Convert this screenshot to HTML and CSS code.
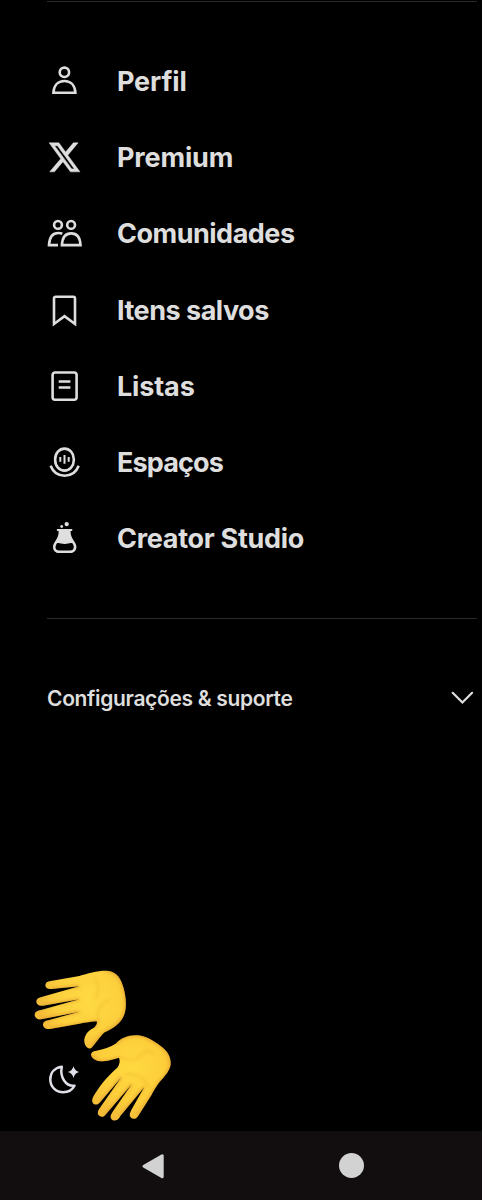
FILE: index.html
```html
<!DOCTYPE html>
<html lang="pt-BR">

<head>
  <meta charset="UTF-8">
  <meta name="viewport" content="width=device-width, initial-scale=1.0">
  <title>Menu</title>
  <link rel="stylesheet" href="styles.css">
</head>

<body>

  <nav class="menu">
    <a class="item">
      <svg class="icon" viewBox="0 0 36 36">
        <circle cx="17.4" cy="9.3" r="4.7" />
        <path d="M6.4 29.7C6.8 22.4 11 18 17.4 18s10.6 4.4 11 11.7z" />
      </svg>
      <span class="perfil">Perfil</span>
    </a>
    <a class="item">
      <svg class="icon solid logo" viewBox="0 0 36 36">
        <path transform="translate(.3 .5) scale(1.43 1.487)" d="M18.244 2.25h3.308l-7.227 8.26 8.502 11.24H16.17l-5.214-6.817L4.99 21.75H1.68l7.73-8.835L1.254 2.25H8.08l4.713 6.231zm-1.161 17.52h1.833L7.084 4.126H5.117z" />
      </svg>
      <span class="premium">Premium</span>
    </a>
    <a class="item">
      <svg class="icon" viewBox="0 0 36 36">
        <circle cx="11" cy="9.9" r="3.9" />
        <circle cx="24.1" cy="9.9" r="3.9" />
        <path d="M14.9 30.1c.4-7.5 3.7-11.7 9.3-11.7s8.9 4.2 9.3 11.7z" />
        <path d="M11 30.1H2C2.4 22.2 6 18 11.4 18c1.5 0 2.8.2 3.9.7" />
      </svg>
      <span class="comunidades">Comunidades</span>
    </a>
    <a class="item">
      <svg class="icon" viewBox="0 0 36 36">
        <path d="M7 32V6.500Q7 4.700 8.800 4.700H26.200Q28 4.700 28 6.500V32L17.500 24.200z" />
      </svg>
      <span class="itens">Itens salvos</span>
    </a>
    <a class="item">
      <svg class="icon" viewBox="0 0 36 36">
        <rect x="5.600" y="4.500" width="24" height="27.200" rx="2.500" />
        <path d="M11.700 13.500h11.700M11.700 19.500h11.700" />
      </svg>
      <span class="listas">Listas</span>
    </a>
    <a class="item">
      <svg class="icon" viewBox="0 0 36 36">
        <rect x="8.200" y="4.600" width="18.600" height="22" rx="9.300" ry="10.300" />
        <path d="M3.600 21.800C6 28 11 31.800 17.600 31.800S29.300 28 31.700 21.800" />
        <path class="thin" d="M13.300 13v4.800M17.500 11v8.700M21.700 13v4.800" />
      </svg>
      <span class="espacos">Espaços</span>
    </a>
    <a class="item">
      <svg class="icon solid" viewBox="0 0 36 36">
        <circle cx="19.700" cy="4.100" r="2.200" />
        <circle cx="14.700" cy="6.500" r="1.400" />
        <path fill-rule="evenodd" d="M10.600 9.100h13.900q1.200 0 .9 1.100-.3.900-1.800.9c-.1 4 .9 6.300 3.200 9.700 1.700 2.500 2.600 4.300 2.600 6.200 0 3.600-2.600 6.100-6.400 6.100H12.200C8.500 33.100 6 30.600 6 27c0-1.900.9-3.700 2.600-6.200 2.200-3.400 3.200-5.700 3-9.700-1.400 0-1.800-.3-1.900-1q0-1 .9-1zM9.900 23.200C8.900 24.900 8.500 26.100 8.500 27.200c0 2 1.500 3.300 3.700 3.300H23c2.300 0 3.800-1.300 3.800-3.300 0-1.300-.5-2.400-1.400-4-3-.6-4.500.9-7.800.8-3.500-.1-5-1.500-7.700-.8z" />
      </svg>
      <span class="creator">Creator Studio</span>
    </a>
  </nav>

  <div class="settings">
    <span>Configurações &amp; suporte</span>
    <svg class="chevron" viewBox="0 0 24 16">
      <path d="M2.700 2.800l9.700 9.700 9.700-9.700" />
    </svg>
  </div>

  <div class="bottom">
    <svg class="moon" viewBox="0 0 32 32">
      <path d="M13.800 2.700C6.800 3.700 2.300 8.600 2.300 15.500c0 7.300 5.600 12.800 13 12.800 5 0 9-2.400 11.200-6.600-8.700.9-14.900-8.500-12.700-19z" />
      <path class="star" d="M25.500 2.300q1.200 4.600 5.700 5.800-4.500 1.200-5.700 5.800-1.200-4.600-5.700-5.800 4.500-1.200 5.700-5.800z" />
    </svg>

    <svg class="hands" viewBox="0 0 510 510">
      <defs>
        <radialGradient id="palm1" gradientUnits="userSpaceOnUse" cx="205" cy="120" r="150">
          <stop offset="0" stop-color="#ffda43" />
          <stop offset=".65" stop-color="#fcd03d" />
          <stop offset="1" stop-color="#f3bb38" />
        </radialGradient>
        <radialGradient id="palm2" gradientUnits="userSpaceOnUse" cx="335" cy="325" r="160">
          <stop offset="0" stop-color="#ffd940" />
          <stop offset=".6" stop-color="#fdcf3b" />
          <stop offset="1" stop-color="#f3bb38" />
        </radialGradient>
        <filter id="soft" x="-20%" y="-20%" width="140%" height="140%">
          <feGaussianBlur stdDeviation="4" />
        </filter>
        <clipPath id="clip1"><use href="#hand1" /></clipPath>
        <clipPath id="clip2"><use href="#hand2" /></clipPath>
      </defs>

      <!-- upper hand, fingers to the left -->
      <path id="hand1" fill="url(#palm1)" d="M88 64L178 48C202 40 230 32 258 32C284 33 299 48 306 70C317 99 321 132 315 157C308 185 286 202 254 217C238 231 226 253 214 264C203 271 191 255 193 238C196 220 207 210 222 203C230 196 232 190 230 184C214 185 196 188 178 191L90 207C76 209 68 201 69 192C70 185 77 182 88 180L178 155L64 178C52 180 43 172 44 163C45 155 52 152 63 150L178 118L69 137C56 139 48 132 49 123C50 116 56 112 67 110L178 79L94 87C83 88 76 83 76 75C77 68 82 65 88 64Z" />
      <g clip-path="url(#clip1)">
        <path class="edge" d="M258 32C284 33 299 48 306 70C317 99 321 132 315 157C308 185 286 202 254 217C238 231 226 253 214 264M222 203Q233 192 230 184L90 207M178 155L64 178M178 118L69 137M178 79L94 87" />
        <path class="crease" d="M236 184C226 154 240 128 270 120M226 56C238 74 238 98 225 116" />
      </g>

      <!-- lower hand, fingers down -->
      <path id="hand2" fill="url(#palm2)" d="M229 272C250 267 272 261 287 251C304 233 327 224 354 226C379 229 398 241 422 258C443 273 453 291 452 313C450 330 437 347 418 367C407 383 401 392 394 406L355 467C350 478 337 479 331 471C327 465 330 458 334 450L373 381L301 468C295 482 281 486 274 477C269 469 274 462 279 454L335 373L256 465C249 474 238 471 234 463C232 455 236 449 241 442L304 352L239 428C232 436 221 436 217 426C215 418 219 412 224 403C246 367 266 346 292 323C299 313 301 302 297 293C284 296 268 303 250 304C230 305 215 296 213 284C213 277 219 273 229 272Z" />
      <g clip-path="url(#clip2)">
        <path class="edge" d="M287 251C304 233 327 224 354 226C379 229 398 241 422 258C443 273 453 291 452 313C450 330 437 347 418 367L355 467M373 381L301 468M335 373L256 465M304 352L239 428M297 293Q268 304 250 304Q220 303 213 284" />
        <path class="crease" d="M298 291C325 305 350 302 360 286C370 272 388 271 402 281M315 343C345 337 370 352 388 382" />
      </g>
    </svg>
  </div>

  <footer class="navbar">
    <svg class="back" viewBox="0 0 24 28">
      <path d="M3 13.200L21.200 2.800V23.800z" />
    </svg>
    <div class="home"></div>
  </footer>

</body>

</html>
```
FILE: styles.css
```css
* {
  box-sizing: border-box;
}

body {
  margin: 0;
  height: 1200px;
  display: flex;
  flex-direction: column;
  overflow: hidden;
  background-color: black;
  color: #dedede;
  font-family: Inter, "Noto Sans", sans-serif;
}

.menu {
  margin: 1px 5px 0 47px;
  height: 618px;
  padding-top: 41px;
  border-top: 1px solid #2b2b2e;
  border-bottom: 1px solid #2b2b2e;
}

.item {
  display: flex;
  align-items: center;
  gap: 34px;
  height: 76.2px;
  font-size: 27px;
  font-weight: 650;
  line-height: 36px;
  white-space: nowrap;
}

.item span {
  padding-top: 2px;
}

.perfil,
.premium,
.listas {
  letter-spacing: -.15px;
}

.comunidades,
.itens {
  letter-spacing: -.5px;
}

.espacos {
  letter-spacing: -.85px;
}

.creator {
  letter-spacing: -.3px;
}

.icon {
  width: 36px;
  height: 36px;
  flex-shrink: 0;
  fill: none;
  stroke: #dedede;
  stroke-width: 2.6;
}

.solid {
  fill: #dedede;
  stroke: none;
}

.logo {
  stroke: #dedede;
  stroke-width: .35;
}

.thin {
  stroke-width: 2;
}

.settings {
  display: flex;
  align-items: center;
  justify-content: space-between;
  height: 158px;
  padding: 0 8px 0 47px;
  font-size: 21px;
  font-weight: 600;
  letter-spacing: -.33px;
}

.chevron {
  width: 24px;
  height: 16px;
  fill: none;
  stroke: #dedede;
  stroke-width: 2.2;
  stroke-linecap: round;
}

.bottom {
  position: relative;
  flex: 1;
  display: flex;
  align-items: flex-end;
  padding: 0 0 35px 48px;
}

.moon {
  width: 32px;
  height: 32px;
  fill: none;
  stroke: #dfe0e8;
  stroke-width: 2.5;
  stroke-linejoin: round;
}

.star {
  fill: #dfe0e8;
  stroke: none;
}

/* hands lie over the theme button */
.hands {
  position: absolute;
  left: 20px;
  bottom: 1px;
  width: 170px;
  height: 170px;
}

.edge,
.crease {
  fill: none;
  stroke: #d98b2b;
  stroke-width: 8;
  opacity: .55;
  filter: url(#soft);
}

.crease {
  stroke: #e8a52e;
  stroke-width: 5;
  opacity: .4;
}

.navbar {
  display: flex;
  align-items: flex-start;
  height: 69px;
  padding: 22px 0 0 141px;
  background-color: #120e0f;
}

.back {
  width: 24px;
  height: 28px;
  fill: #d2d2d2;
  stroke: #d2d2d2;
  stroke-width: 3;
  stroke-linejoin: round;
}

.home {
  width: 25px;
  height: 25px;
  margin-left: 174px;
  border-radius: 50%;
  background-color: #d2d2d2;
}
```
